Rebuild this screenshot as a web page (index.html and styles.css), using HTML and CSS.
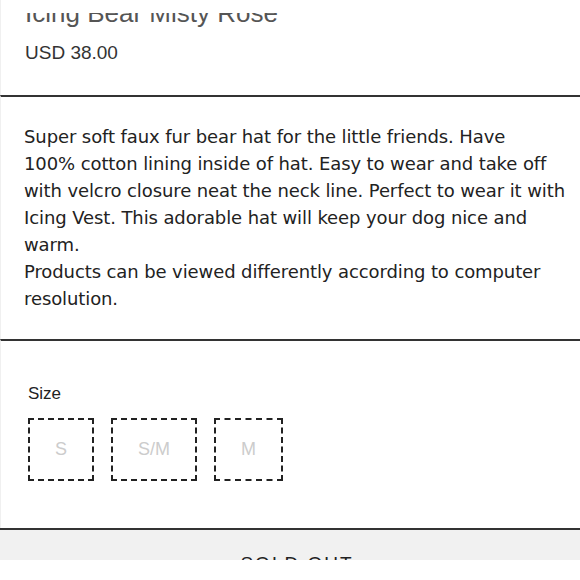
FILE: index.html
```html
<!DOCTYPE html>
<html>
<head>
<meta charset="utf-8">
<link rel="stylesheet" href="styles.css">
</head>
<body>
<div class="page">
  <section class="head">
    <div class="title-clip">
      <h1 class="title">Icing Bear Misty Rose</h1>
    </div>
    <div class="price">USD 38.00</div>
  </section>
  <section class="desc">
    <p>Super soft faux fur bear hat for the little friends. Have<br>100% cotton lining inside of hat. Easy to wear and take off with velcro closure neat the neck line. Perfect to wear it with Icing Vest. This adorable hat will keep your dog nice and warm.<br>Products can be viewed differently according to computer resolution.</p>
  </section>
  <section class="options">
    <div class="opt-label">Size</div>
    <div class="sizes">
      <span class="size">S</span>
      <span class="size">S/M</span>
      <span class="size">M</span>
    </div>
  </section>
  <div class="buy">
    <div class="soldout">SOLD OUT</div>
  </div>
</div>
</body>
</html>
```

FILE: styles.css
```css
html, body {
  margin: 0;
  padding: 0;
  background: #fff;
}
.page {
  width: 580px;
  height: 580px;
  overflow: hidden;
  font-family: "Liberation Sans", Arial, sans-serif;
}
.head {
  border-left: 1px solid #f0f0f0;
  padding: 13px 0 0 24px;
  height: 95px;
  box-sizing: border-box;
}
.title-clip {
  height: 17px;
  overflow: hidden;
}
.title {
  margin: -15px 0 0 0;
  font-weight: normal;
  font-size: 26px;
  line-height: 30px;
  color: #555;
  white-space: nowrap;
}
.price {
  font-size: 19px;
  line-height: 22px;
  color: #333;
  margin-top: 12px;
}
.desc {
  border-top: 2px solid #333;
  border-left: 1px solid #f0f0f0;
  padding: 26px 4px 0 23px;
  height: 244px;
  box-sizing: border-box;
}
.desc p {
  margin: 0;
  font-family: "DejaVu Sans", Verdana, sans-serif;
  font-size: 18px;
  letter-spacing: -0.1px;
  line-height: 27px;
  color: #222;
}
.options {
  border-top: 2px solid #333;
  border-left: 1px solid #f0f0f0;
  padding: 43px 0 0 27px;
  box-sizing: border-box;
  height: 189px;
}
.opt-label {
  font-size: 17px;
  line-height: 20px;
  color: #222;
}
.sizes {
  display: flex;
  gap: 17px;
  margin-top: 14px;
}
.size {
  border: 2px dashed #222;
  height: 63px;
  box-sizing: border-box;
  padding: 0 25px;
  display: flex;
  align-items: center;
  justify-content: center;
  font-size: 18px;
  color: #ccc;
}
.buy {
  border-top: 2px solid #333;
  background: #f1f1f1;
  height: 30px;
  overflow: hidden;
  text-align: center;
}
.soldout {
  padding: 24px 0 0 14px;
  font-size: 19px;
  letter-spacing: 2px;
  color: #222;
  line-height: 20px;
}
```
